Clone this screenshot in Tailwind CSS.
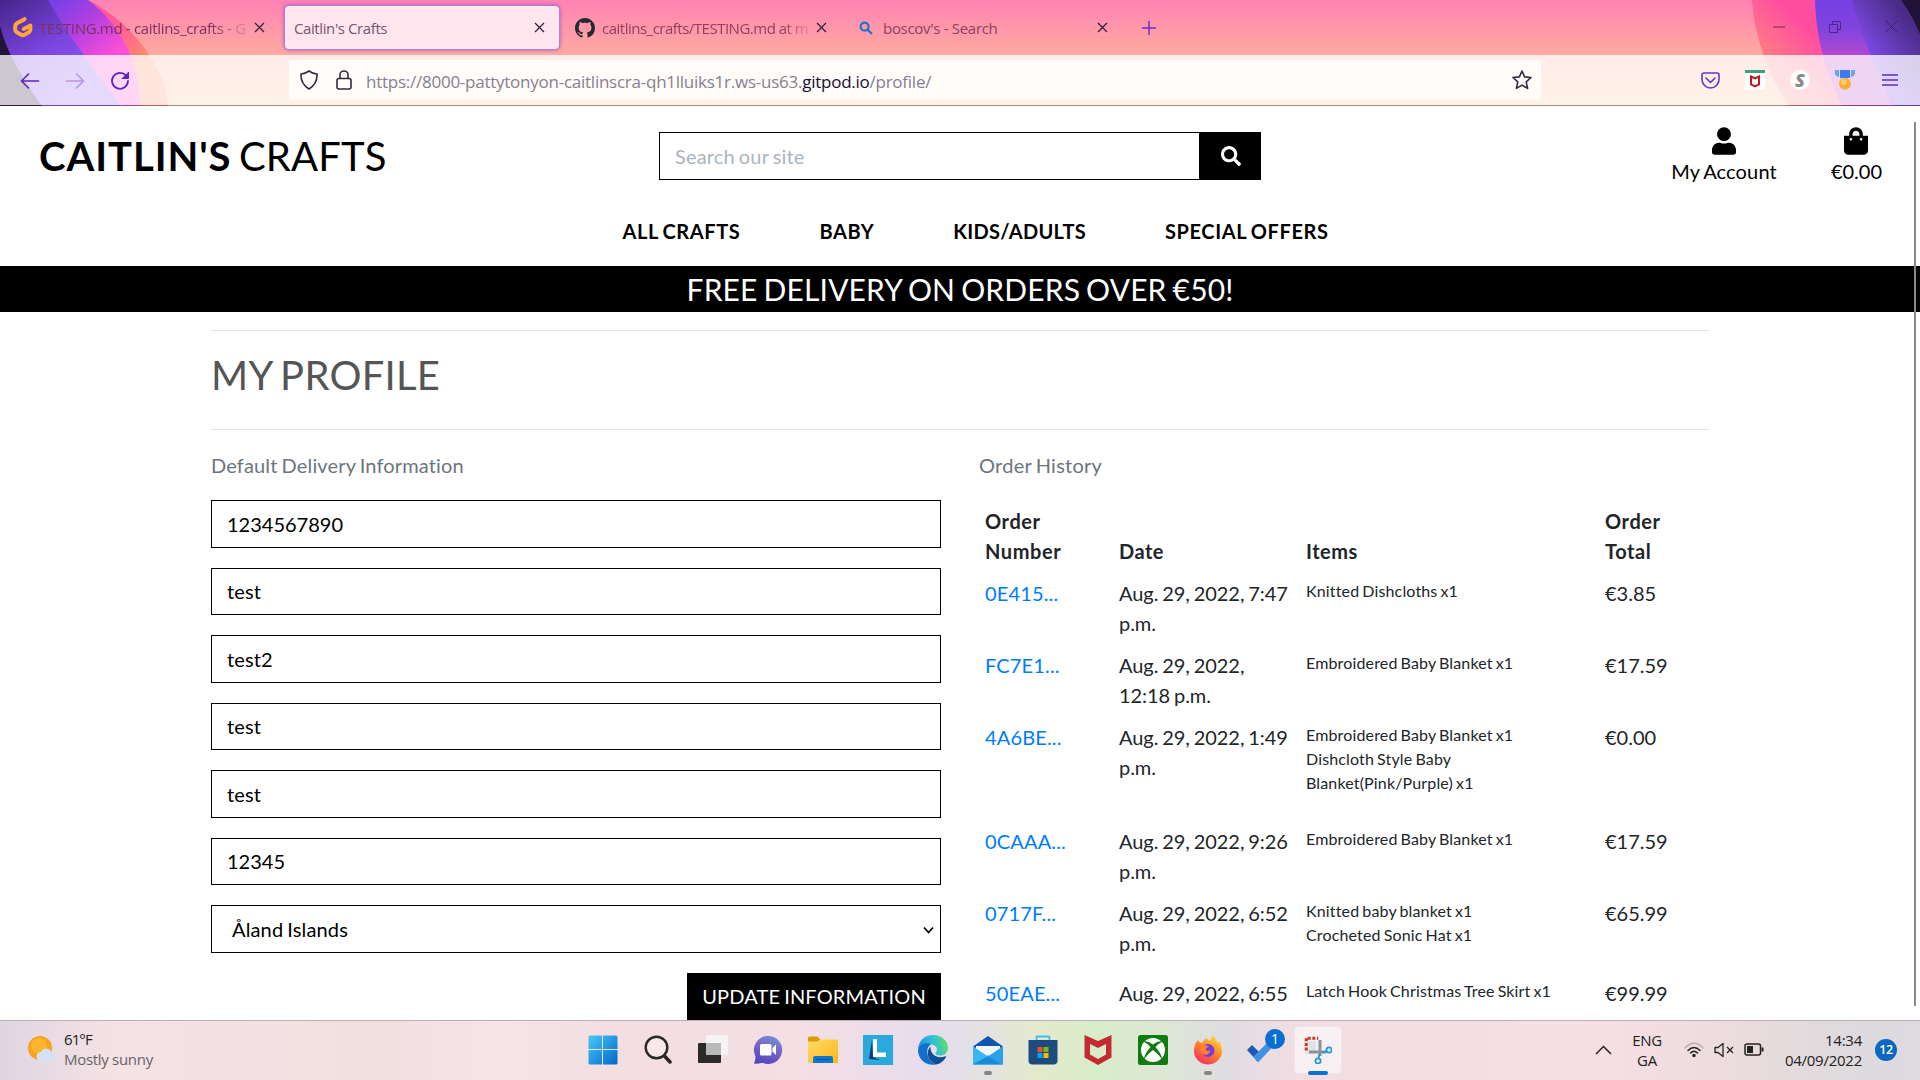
<!DOCTYPE html>
<html lang="en">
<head>
<meta charset="utf-8">
<title>Caitlin's Crafts</title>
<script src="https://cdn.jsdelivr.net/npm/@tailwindcss/browser@4"></script>
</head>
<body class="w-[1920px] h-[1080px] overflow-hidden flex flex-col bg-white font-['Lato',sans-serif] text-[20px] leading-[30px] text-[#212529]">

<!-- Browser chrome -->
<div class="relative shrink-0 h-[106px] font-['Open_Sans',sans-serif] text-[15px]">
  <svg class="absolute inset-0" width="1920" height="106" viewBox="0 0 1920 106">
    <defs>
      <linearGradient id="bg" x1="0" y1="0" x2="0" y2="106" gradientUnits="userSpaceOnUse"><stop offset="0" stop-color="#ff82b4"/><stop offset=".52" stop-color="#ffaba0"/><stop offset="1" stop-color="#ffc79a"/></linearGradient>
      <linearGradient id="pL" x1="0" y1="0" x2="60" y2="100" gradientUnits="userSpaceOnUse"><stop offset="0" stop-color="#45258a"/><stop offset=".55" stop-color="#7a45e0"/><stop offset="1" stop-color="#8f5cf0"/></linearGradient>
      <linearGradient id="vL" x1="60" y1="0" x2="110" y2="60" gradientUnits="userSpaceOnUse"><stop offset="0" stop-color="#7840e6"/><stop offset=".45" stop-color="#b53fe0"/><stop offset="1" stop-color="#ff4fd6"/></linearGradient>
      <linearGradient id="oL" x1="90" y1="0" x2="150" y2="60" gradientUnits="userSpaceOnUse"><stop offset="0" stop-color="#ff4fa0"/><stop offset=".5" stop-color="#ff5f96"/><stop offset="1" stop-color="#ff9068"/></linearGradient>
      <linearGradient id="mR" x1="1760" y1="60" x2="1800" y2="20" gradientUnits="userSpaceOnUse"><stop offset="0" stop-color="#ff8280"/><stop offset="1" stop-color="#ff4da0"/></linearGradient>
      <linearGradient id="pR" x1="0" y1="0" x2="0" y2="60" gradientUnits="userSpaceOnUse"><stop offset="0" stop-color="#7540e4"/><stop offset=".5" stop-color="#8244dc"/><stop offset="1" stop-color="#bb4ad0"/></linearGradient>
      <linearGradient id="qR" x1="1865" y1="45" x2="1905" y2="15" gradientUnits="userSpaceOnUse"><stop offset="0" stop-color="#7a48e2"/><stop offset="1" stop-color="#4a2c86"/></linearGradient>
    </defs>
    <rect width="1920" height="106" fill="url(#bg)"/>
    <path d="M88 0C125 18 165 62 168 106H0V0z" fill="url(#oL)"/>
    <path d="M88 0C118 22 140 60 140 106H0V0z" fill="url(#vL)"/>
    <path d="M48 0C62 25 88 62 121 106H0V0z" fill="url(#pL)"/>
    <path d="M0 26C6 50 20 76 42 106H0z" fill="#23123a"/>
    <path d="M1752 0C1754 35 1768 75 1789 106H1920V0z" fill="url(#mR)"/>
    <path d="M1815 0C1816 38 1826 76 1843 106H1920V0z" fill="url(#pR)"/>
    <path d="M1852 0C1860 30 1872 60 1893 106H1920V0z" fill="url(#qR)"/>
    <path d="M1901 0Q1912 15 1920 34V0z" fill="#22123a"/>
    <rect y="55" width="1920" height="50" fill="#fff" fill-opacity=".77"/>
    <rect y="105" width="1920" height="1" fill="#402040" fill-opacity=".4"/>
  </svg>

  <div class="relative h-[55px] flex items-start">
    <div class="w-[285px] h-[55px] pl-[13px] pr-[19px] flex items-center">
      <svg class="shrink-0" width="20" height="21" viewBox="0 0 20 21" fill="none"><path d="M11.5 2.200 4 6.300Q2.200 7.400 2.200 9.200v3.600q0 1.600 1.600 2.500l4.400 2.500q1.600.9 3.200 0l4.400-2.500q1.600-.9 1.600-2.500V8.500L10.800 12" stroke="#ffa53a" stroke-width="4" stroke-linecap="round" stroke-linejoin="round"/></svg>
      <div class="ml-[6px] w-[214px] whitespace-nowrap tracking-[-0.320px] text-[#7b3260] mask-r-from-80%">TESTING.md - caitlins_crafts - G</div>
      <svg class="ml-[1px] shrink-0" width="11" height="11" viewBox="0 0 11 11"><path d="M1 1l9 9M10 1l-9 9" stroke="#33203f" stroke-width="1.300"/></svg>
    </div>
    <div class="mt-[6px] w-[274px] h-[43px] pl-[9px] pr-[14px] flex items-center justify-between rounded-[4px] bg-[#ffe6ee] ring-1 ring-[#a77fe6] shadow-[0_0_5px_#7a3fb0]">
      <div class="tracking-[-0.400px] text-[#72566f]">Caitlin's Crafts</div>
      <svg width="11" height="11" viewBox="0 0 11 11"><path d="M1 1l9 9M10 1l-9 9" stroke="#33203f" stroke-width="1.300"/></svg>
    </div>
    <div class="w-[283px] h-[55px] pl-[16px] flex items-center">
      <svg class="shrink-0" width="20" height="20" viewBox="0 0 16 16"><path fill="#24292e" d="M8 0C3.58 0 0 3.58 0 8c0 3.54 2.29 6.53 5.47 7.59.4.07.55-.17.55-.38 0-.19-.01-.82-.01-1.49-2.01.37-2.53-.49-2.69-.94-.09-.23-.48-.94-.82-1.13-.28-.15-.68-.52-.01-.53.63-.01 1.08.58 1.23.82.72 1.21 1.87.87 2.33.66.07-.52.28-.87.51-1.07-1.78-.2-3.64-.89-3.64-3.95 0-.87.31-1.59.82-2.15-.08-.2-.36-1.02.08-2.12 0 0 .67-.21 2.2.82.64-.18 1.32-.27 2-.27s1.36.09 2 .27c1.53-1.04 2.2-.82 2.2-.82.44 1.1.16 1.92.08 2.12.51.56.82 1.27.82 2.15 0 3.07-1.87 3.75-3.65 3.95.29.25.54.73.54 1.48 0 1.07-.01 1.93-.01 2.200 0 .21.15.46.55.38A8.010 8.010 0 0 0 16 8c0-4.420-3.580-8-8-8z"/></svg>
      <div class="ml-[7px] w-[213px] whitespace-nowrap tracking-[-0.500px] text-[#90405f] mask-r-from-85%">caitlins_crafts/TESTING.md at m</div>
      <svg class="ml-[1px] shrink-0" width="11" height="11" viewBox="0 0 11 11"><path d="M1 1l9 9M10 1l-9 9" stroke="#33203f" stroke-width="1.300"/></svg>
    </div>
    <div class="w-[266px] h-[55px] pl-[17px] flex items-center">
      <svg width="14" height="14" viewBox="0 0 14 14" fill="none" stroke="#2472c8" stroke-width="2.200"><circle cx="5.600" cy="5.600" r="4"/><path d="M8.600 8.600 13 13"/></svg>
      <div class="ml-[10px] w-[214px] tracking-[-0.300px] text-[#8c4260]">boscov's - Search</div>
      <svg class="shrink-0" width="11" height="11" viewBox="0 0 11 11"><path d="M1 1l9 9M10 1l-9 9" stroke="#33203f" stroke-width="1.300"/></svg>
    </div>
    <svg class="mt-[20px] ml-[33px]" width="16" height="16" viewBox="0 0 16 16"><path d="M8 1v14M1 8h14" stroke="#6b30c4" stroke-width="1.500"/></svg>
    <div class="ml-auto h-[53px] pr-[22px] flex items-center gap-[44px]">
      <svg width="12" height="14" viewBox="0 0 12 14"><path d="M0 7h12" stroke="#782a58"/></svg>
      <svg width="12" height="12" viewBox="0 0 12 12" fill="none" stroke="#4d2788"><path d="M.5 3.500h8v8h-8zM3.500 3.500V.5h8v8h-3"/></svg>
      <svg width="13" height="13" viewBox="0 0 13 13" fill="none" stroke="#3d2365"><path d="M.5.5l12 12M12.500.5l-12 12"/></svg>
    </div>
  </div>

  <div class="relative h-[50px] flex items-center">
    <div class="w-[289px] pt-[1px] pl-[20px] flex items-center gap-[25px]">
      <svg width="20" height="20" viewBox="0 0 20 20" fill="none" stroke="#5b26bd" stroke-width="1.600" stroke-linecap="round" stroke-linejoin="round"><path d="M18.500 10H1.500M8.500 3 1.500 10l7 7"/></svg>
      <svg width="20" height="20" viewBox="0 0 20 20" fill="none" stroke="#b897e0" stroke-width="1.600" stroke-linecap="round" stroke-linejoin="round"><path d="M1.500 10h17M11.500 3l7 7-7 7"/></svg>
      <svg width="20" height="20" viewBox="0 0 20 20" fill="none" stroke="#5b26bd" stroke-width="1.800" stroke-linecap="round"><path d="M16 4.500A8 8 0 1 0 18 10"/><path d="M18.500 1.500v6h-6z" fill="#5b26bd" stroke-width="1"/></svg>
    </div>
    <div class="w-[1252px] h-[40px] pl-[11px] pr-[9px] flex items-center rounded-[4px] bg-[#fffcfa]">
      <svg width="18" height="20" viewBox="0 0 18 20" fill="none" stroke="#33283f" stroke-width="1.600" stroke-linejoin="round"><path d="M9 1Q5.500 3.500 1 4q-.5 10 8 15 8.500-5 8-15Q12.500 3.500 9 1z"/></svg>
      <svg class="ml-[18px]" width="16" height="20" viewBox="0 0 16 20" fill="none" stroke="#33283f" stroke-width="1.600"><rect x="1" y="8.500" width="14" height="10.500" rx="2"/><path d="M4 8.500V5a4 4 0 0 1 8 0v3.500"/></svg>
      <div class="ml-[14px] flex-1 pt-[3px] text-[17px] tracking-[-0.250px] text-[#86808e]">https://8000-pattytonyon-caitlinscra-qh1lluiks1r.ws-us63.<span class="text-[#1b0d33]">gitpod.io</span>/profile/</div>
      <svg width="20" height="20" viewBox="0 0 20 20" fill="none" stroke="#33283f" stroke-width="1.600" stroke-linejoin="round"><path d="m10 1 2.600 5.900 6.400.6-4.800 4.300 1.400 6.600L10 15.100l-5.600 3.300 1.400-6.600L1 7.500l6.400-.6z"/></svg>
    </div>
    <div class="ml-auto pr-[22px] flex items-center gap-[25px]">
      <svg width="19" height="17" viewBox="0 0 19 17" fill="none" stroke="#6538c2" stroke-width="1.600" stroke-linecap="round" stroke-linejoin="round"><path d="M3 1h13q2 0 2 2v4.500a8.500 8.500 0 0 1-17 0V3q0-2 2-2z"/><path d="m5 6 4.500 4.500L14 6"/></svg>
      <div class="w-[20px] h-[20px] bg-white border-t-[3px] border-[#3f9f80] flex justify-center items-center"><svg width="12" height="13" viewBox="0 0 12 13" fill="none" stroke="#c01820" stroke-width="2"><path d="M2 1.500 6 3.500l4-2v8L6 11.500 2 9.500z"/></svg></div>
      <div class="w-[20px] h-[20px] rounded-full bg-white text-center text-[18px] leading-[20px] font-extrabold italic text-[#8b8b8b]">S</div>
      <svg width="20" height="20" viewBox="0 0 20 20"><path d="M0 0h4v7q-4-1-4-4zM20 0h-4v7q4-1 4-4z" fill="#5fa8f2"/><path d="M5 0h10v8H5z" fill="#3f78f0"/><circle cx="10" cy="13.800" r="6" fill="#fdab3d"/><circle cx="8.800" cy="12" r="3" fill="#ffcf62"/></svg>
      <svg class="ml-[2px]" width="16" height="14" viewBox="0 0 16 14" stroke="#5c2cc8" stroke-width="1.500"><path d="M0 2h16M0 7h16M0 12h16"/></svg>
    </div>
  </div>
</div>

<!-- Page -->
<main class="relative flex-1 min-h-0 overflow-hidden tracking-[0.150px] [word-spacing:-1.200px]">
  <header>
    <div class="h-[100px] pl-[39px] pr-[38px] grid grid-cols-[620px_602px_1fr] items-center">
      <div class="text-[40px] leading-[48px] text-black whitespace-nowrap [word-spacing:-3px]"><span class="font-bold tracking-[0.950px]">CAITLIN'S</span> CRAFTS</div>
      <div class="flex h-[48px]">
        <div class="flex-1 border border-black pl-[15px] pt-[8px] text-[#aab4be]">Search our site</div>
        <div class="w-[61px] bg-black flex items-center justify-center">
          <svg width="20" height="20" viewBox="0 0 512 512" fill="#fff"><path d="M505 442.700 405.300 343c-4.500-4.500-10.600-7-17-7H372c27.600-35.300 44-79.700 44-128C416 93.100 322.900 0 208 0S0 93.100 0 208s93.100 208 208 208c48.300 0 92.700-16.400 128-44v16.300c0 6.400 2.500 12.500 7 17l99.700 99.700c9.400 9.400 24.600 9.400 33.900 0l28.300-28.300c9.400-9.400 9.400-24.600.1-34zM208 336c-70.700 0-128-57.200-128-128 0-70.700 57.200-128 128-128 70.700 0 128 57.200 128 128 0 70.700-57.200 128-128 128z"/></svg>
        </div>
      </div>
      <div class="flex justify-end gap-[54px] pt-[1px] text-black">
        <div class="flex flex-col items-center gap-[1px]">
          <svg width="24" height="28" viewBox="0 0 448 512"><path d="M224 256c70.700 0 128-57.300 128-128S294.700 0 224 0 96 57.300 96 128s57.300 128 128 128zm89.600 32h-16.700c-22.200 10.200-46.900 16-72.900 16s-50.600-5.800-72.900-16h-16.700C60.200 288 0 348.200 0 422.400V464c0 26.500 21.500 48 48 48h352c26.500 0 48-21.500 48-48v-41.600c0-74.200-60.200-134.400-134.400-134.400z"/></svg>
          <div>My Account</div>
        </div>
        <div class="flex flex-col items-center gap-[1px]">
          <svg width="24" height="28" viewBox="0 0 448 512"><path d="M352 160v-32C352 57.420 294.579 0 224 0 153.420 0 96 57.420 96 128v32H0v272c0 44.183 35.817 80 80 80h288c44.183 0 80-35.817 80-80V160h-96zm-192-32c0-35.290 28.710-64 64-64s64 28.710 64 64v32H160v-32zm160 120c-13.255 0-24-10.745-24-24s10.745-24 24-24 24 10.745 24 24-10.745 24-24 24zm-192 0c-13.255 0-24-10.745-24-24s10.745-24 24-24 24 10.745 24 24-10.745 24-24 24z"/></svg>
          <div class="tracking-normal">€0.00</div>
        </div>
      </div>
    </div>
    <nav class="h-[60px] pb-[10px] pl-[31px] flex items-center justify-center gap-[79px] font-bold text-black tracking-[0.600px]">
      <div>ALL CRAFTS</div><div>BABY</div><div class="tracking-[0.300px]">KIDS/ADULTS</div><div>SPECIAL OFFERS</div>
    </nav>
    <div class="h-[46px] bg-black text-white text-center text-[30px] leading-[46px] [word-spacing:-1.800px]">FREE DELIVERY ON ORDERS OVER €50!</div>
  </header>

  <div class="ml-[211px] w-[1498px] pt-[18px]">
    <div class="border-y border-[#e5e5e5] pt-[20px] pb-[30px] text-[40px] leading-[48px] text-[#555] [word-spacing:-2.400px] tracking-[0.250px]">MY PROFILE</div>
    <div class="mt-[20px] grid grid-cols-[730px_730px] gap-x-[38px]">
      <div>
        <p class="text-[#6c757d] mb-[20px]">Default Delivery Information</p>
        <div class="flex flex-col gap-[20px] text-black">
          <div class="h-[47.500px] border border-black px-[15px] pt-[8px] tracking-normal">1234567890</div>
          <div class="h-[47.500px] border border-black px-[15px] pt-[7.500px]">test</div>
          <div class="h-[47.500px] border border-black px-[15px] pt-[8px]">test2</div>
          <div class="h-[47.500px] border border-black px-[15px] pt-[7.500px]">test</div>
          <div class="h-[47.500px] border border-black px-[15px] pt-[8px]">test</div>
          <div class="h-[47.500px] border border-black px-[15px] pt-[7.500px] tracking-normal">12345</div>
          <div class="h-[47.500px] border border-black pl-[20px] pr-[6px] pt-[8px] flex justify-between">Åland Islands<svg class="mt-[12px]" width="11" height="9" viewBox="0 0 11 9" fill="none" stroke="#000" stroke-width="1.800"><path d="m1 1.500 4.500 5 4.500-5"/></svg></div>
          <div class="self-end h-[50px] w-[254px] bg-black text-white text-center pt-[8px] whitespace-nowrap">UPDATE INFORMATION</div>
        </div>
      </div>
      <div>
        <p class="text-[#6c757d] mb-[20px] tracking-[0.250px]">Order History</p>
        <div class="grid grid-cols-[134px_187px_299px_110px] [&>*]:p-[6px] [&>ul]:pt-[7px] [&>ul]:pb-[5px] [&>ul]:[word-spacing:-1.200px]">
          <div class="font-bold tracking-[0.600px]">Order<br>Number</div><div class="font-bold self-end tracking-[0.500px]">Date</div><div class="font-bold self-end tracking-[0.500px]">Items</div><div class="font-bold tracking-[0.600px]">Order<br>Total</div>

          <div class="text-[#007bff]">0E415...</div><div class="tracking-[-0.050px]">Aug. 29, 2022, 7:47 p.m.</div><ul class="text-[16px] leading-[24px]"><li class="mb-[20px]">Knitted Dishcloths x1</li></ul><div class="tracking-normal">€3.85</div>

          <div class="text-[#007bff]">FC7E1...</div><div class="tracking-[-0.050px]">Aug. 29, 2022,<br>12:18 p.m.</div><ul class="text-[16px] leading-[24px]"><li class="mb-[20px]">Embroidered Baby Blanket x1</li></ul><div class="tracking-normal">€17.59</div>

          <div class="text-[#007bff]">4A6BE...</div><div class="tracking-[-0.050px]">Aug. 29, 2022, 1:49 p.m.</div><ul class="text-[16px] leading-[24px]"><li>Embroidered Baby Blanket x1</li><li class="mb-[20px]">Dishcloth Style Baby<br>Blanket(Pink/Purple) x1</li></ul><div class="tracking-normal">€0.00</div>

          <div class="text-[#007bff]">0CAAA...</div><div class="tracking-[-0.050px]">Aug. 29, 2022, 9:26 p.m.</div><ul class="text-[16px] leading-[24px]"><li class="mb-[20px]">Embroidered Baby Blanket x1</li></ul><div class="tracking-normal">€17.59</div>

          <div class="text-[#007bff]">0717F...</div><div class="tracking-[-0.050px]">Aug. 29, 2022, 6:52 p.m.</div><ul class="text-[16px] leading-[24px]"><li>Knitted baby blanket x1</li><li class="mb-[20px]">Crocheted Sonic Hat x1</li></ul><div class="tracking-normal">€65.99</div>

          <div class="text-[#007bff]">50EAE...</div><div class="tracking-[-0.050px]">Aug. 29, 2022, 6:55</div><ul class="text-[16px] leading-[24px]"><li>Latch Hook Christmas Tree Skirt x1</li></ul><div class="tracking-normal">€99.99</div>
        </div>
      </div>
    </div>
  </div>
  <div class="absolute right-[4px] top-[16px] w-[2px] h-[884px] bg-[#8a8a8a]"></div>
</main>

<!-- Taskbar -->
<footer class="relative shrink-0 h-[60px] border-t border-[#b9afb4] flex items-center font-['Open_Sans',sans-serif] text-[15px] leading-[20px] text-[#222]">
  <div class="absolute inset-0 bg-[linear-gradient(90deg,#dfd5e2_0%,#f5e2e4_6%,#f2dfe0_20%,#f6e4e8_26%,#f3dfe1_32%,#f3dfe4_42%,#e9dcec_48%,#e4dfea_50%,#e4e9cd_54%,#d8edc9_57%,#dce6d5_61%,#e0dde2_64%,#f3dde2_68%,#f3dfe3_75%,#f5dfe4_84%,#ecdcdd_90%,#dedadd_96%,#dddbe0_100%)]"></div>
  <div class="relative w-[575px] pb-[3px] pl-[27px] flex items-center gap-[9px]">
    <svg width="28" height="28" viewBox="0 0 28 28"><circle cx="13" cy="13" r="12" fill="#f9a21b"/><circle cx="12" cy="11" r="8" fill="#fbb52e"/><path d="M14 26a4.500 4.500 0 0 1 0-9 5.500 5.500 0 0 1 10.500 1A4 4 0 0 1 24 26z" fill="#d6e2f4"/></svg>
    <div class="tracking-[-0.900px]"><div>61°F</div><div class="text-[#68636a] tracking-[-0.300px]">Mostly sunny</div></div>
  </div>
  <div class="relative flex h-full pb-px [&>*]:w-[55px] [&>*]:flex [&>*]:justify-center [&>*]:items-center">
    <div><svg width="30" height="30" viewBox="0 0 30 30"><defs><linearGradient id="w" x1="0" y1="0" x2="1" y2="1"><stop stop-color="#48c8f8"/><stop offset="1" stop-color="#0068c8"/></linearGradient></defs><path d="M1.500.5H14V14H.5V1.500zM15 .5h13.500l1 1V14H15zM.5 15H14v14.500H1.500l-1-1zM15 15h14.500v13.500l-1 1H15z" fill="url(#w)"/></svg></div>
    <div><svg width="28" height="30" viewBox="0 0 28 30" fill="none" stroke="#2b2727" stroke-linecap="round"><circle cx="12.500" cy="12.500" r="10.800" stroke-width="2.400" fill="#fff" fill-opacity=".3"/><path d="m20.500 21 5.500 6" stroke-width="3.500"/></svg></div>
    <div><svg width="30" height="30" viewBox="0 0 30 30"><rect x="0" y="8" width="23" height="20" rx="1" fill="#2b2b2b"/><rect x="8" y="0" width="22" height="20" rx="1" fill="#f5f5f5" fill-opacity=".9"/><path d="M8 8h15v12H8z" fill="#b9b9b9"/></svg></div>
    <div><svg width="30" height="30" viewBox="0 0 30 30"><defs><linearGradient id="ch" x1=".7" y1="0" x2=".3" y2="1"><stop stop-color="#6c92dc"/><stop offset=".4" stop-color="#7a68c4"/><stop offset="1" stop-color="#5046c0"/></linearGradient></defs><path d="M15 1a14 14 0 1 1-5.500 26.800Q5 29 1 28.500q1.500-3 1.500-7A14 14 0 0 1 15 1z" fill="url(#ch)"/><rect x="7" y="9" width="11.500" height="11.500" rx="1.500" fill="#fff"/><path d="m19.500 13 3.500-3.500v10.500l-3.500-3.500z" fill="#fff"/></svg></div>
    <div><svg width="30" height="28" viewBox="0 0 30 28"><defs><linearGradient id="fo" x1="0" y1="0" x2="1" y2="1"><stop stop-color="#ffda6a"/><stop offset="1" stop-color="#fbb815"/></linearGradient></defs><path d="M0 6V2q0-1.500 1.500-1.500h8L12.500 4v4z" fill="#dc9c06"/><path d="M0 5.500h9L12.500 3.500H30V27H0z" fill="url(#fo)"/><path d="M5 27v-5q0-2 2-2h16q2 0 2 2v5z" fill="#1276cf"/><path d="M8 23.500h14" stroke="#0a4f98"/></svg></div>
    <div><div class="w-[30px] h-[30px] bg-[#29a9dc]"><svg width="30" height="30" viewBox="0 0 30 30"><path d="m9 5-3 19 11 1-7-3z" fill="#123a78"/><path d="M10 4h4v13.500h9V22H10z" fill="#fff"/></svg></div></div>
    <div><svg width="30" height="30" viewBox="0 0 30 30"><defs><linearGradient id="e1" x1="0" y1=".5" x2="1" y2=".3"><stop stop-color="#1a90de"/><stop offset=".5" stop-color="#30bfdc"/><stop offset="1" stop-color="#60e060"/></linearGradient></defs><path d="M0 14C1 5 7 0 15 0c9 0 15 6 15 13 0 5-4 7.500-7.500 7.500-4 0-5.500-1.500-5-3 1.500-1 2-3 1-5C16 8 5 7 0 14z" fill="url(#e1)"/><path d="M0 15C1 9 8 7 13 9q-5 4-3.500 10.500 2 7.500 8.500 10C9 31.500 0 25 0 15z" fill="#1170cc"/><path d="M12.500 11.500C7 17 10 26 18 29.500c4-.5 8-3.500 10-7.500.3-.6-.3-1-.8-.700C21 24 12 21 12.500 11.500z" fill="#0f4f96"/></svg></div>
    <div class="relative"><svg width="30" height="29" viewBox="0 0 30 29"><path d="M0 10.500 15 0l15 10.500-15 9z" fill="#0d56ae"/><path d="M3 10h24v9H3z" fill="#f2f4f8"/><path d="M0 10.500V28.500h30V10.500L15 20.500z" fill="#37b8f0"/><path d="m0 28.500 15-8.500L30 28.500z" fill="#198ad8"/><path d="m15 20.500 15-10v18z" fill="#2ba2e6"/></svg><i class="absolute bottom-[4px] w-[8px] h-[4px] rounded-full bg-[#858585]"></i></div>
    <div><svg width="30" height="30" viewBox="0 0 30 30"><path d="M8.500 6V2.500q0-1 1-1h11q1 0 1 1V6" fill="none" stroke="#3cc0f0" stroke-width="1.800"/><path d="M.5 5h29v20.500q0 4-4 4h-21q-4 0-4-4z" fill="#1c4b80"/><path d="M9.500 12h5v5h-5z" fill="#f25022"/><path d="M15.500 12h5v5h-5z" fill="#7fba00"/><path d="M9.500 18h5v5h-5z" fill="#00a4ef"/><path d="M15.500 18h5v5h-5z" fill="#ffb900"/></svg></div>
    <div><svg width="28" height="30" viewBox="0 0 28 30"><path d="m.5 0 13.500 6L27.500 0v22.500L14 30 .5 22.500zM6 9v10.500l8 4.500 8-4.500V9l-8 4z" fill="#c42b30" fill-rule="evenodd"/></svg></div>
    <div><svg width="30" height="30" viewBox="0 0 30 30"><rect width="30" height="30" rx="2.500" fill="#107c10"/><circle cx="15" cy="15" r="12" fill="#fff"/><path d="M5 6.500Q9.500 5 15 9.500 20.500 5 25 6.500 21 8 17.500 12q7 8 6.500 13-2-4.500-9-10-7 5.500-9 10Q5.500 20 12.500 12 9 8 5 6.500z" fill="#107c10"/></svg></div>
    <div class="relative"><svg width="30" height="30" viewBox="0 0 30 30"><defs><linearGradient id="ff" x1=".8" y1="0" x2=".2" y2="1"><stop stop-color="#ffe040"/><stop offset=".45" stop-color="#ff8a28"/><stop offset="1" stop-color="#f52864"/></linearGradient></defs><path d="M5 5q1 2.500 4 3 2-4 5-5 0 2 3 3Q18 3 20 0q3 4 5 8l1-2q3 5 3 10A14 13.500 0 0 1 1 16Q1 9 5 5z" fill="url(#ff)"/><circle cx="15" cy="15.500" r="6.500" fill="#7b3bd6"/><path d="M8 11q5-2 8 1-3 0-3.500 2.500 2 2.500 5 .5-2 6.500-8 4Q6.500 16 8 11z" fill="#ff8528"/></svg><i class="absolute bottom-[4px] w-[8px] h-[4px] rounded-full bg-[#858585]"></i></div>
    <div class="relative"><svg class="mr-[6px]" width="28" height="24" viewBox="0 0 28 24"><path d="m1 12 5-5 11 11-5.500 5.500z" fill="#1f59b8"/><path d="m7.500 18.500 15-15 5 4.500L13 23.500q-1 .8-2 0z" fill="#3f92e4"/></svg><b class="absolute left-[30px] top-[8px] w-[20px] h-[20px] rounded-full bg-[#0a6fd0] text-white text-[14px] leading-[20px] font-normal text-center">1</b></div>
    <div class="relative"><span class="w-[48px] h-[48px] rounded-[5px] bg-[#f9f0f4] border border-[#eee4ea] flex justify-center items-center"><svg width="28" height="28" viewBox="0 0 28 28" fill="none"><path d="M1 18h11V5H3z" fill="#dfe3e8"/><path d="M2.200 14.500V2.200h12" stroke="#c83a18" stroke-width="3" stroke-dasharray="3 1.600"/><path d="M16 4v16M5 16h17" stroke="#8d9298" stroke-width="3"/><circle cx="25" cy="14" r="2.600" stroke="#1a9ad8" stroke-width="1.800"/><circle cx="14" cy="25" r="2.600" stroke="#1a9ad8" stroke-width="1.800"/><path d="m22.500 15.500-4 1M14.500 22l1-4" stroke="#1a9ad8" stroke-width="1.800"/></svg></span><i class="absolute bottom-[4px] w-[20px] h-[4px] rounded-full bg-[#0a74d4]"></i></div>
  </div>
  <div class="relative ml-auto pr-[23px] flex items-center pb-[2px]">
    <svg width="17" height="10" viewBox="0 0 17 10" fill="none" stroke="#222" stroke-width="1.500"><path d="m1 9 7.500-7.500L16 9"/></svg>
    <div class="ml-[20px] text-center tracking-[-0.300px] w-[30px]">ENG<br>GA</div>
    <svg class="ml-[22px]" width="20" height="16" viewBox="0 0 20 16" fill="none" stroke-width="1.500" stroke-linecap="round"><path d="M1 6q9-9.500 18 0" stroke="#b8acae"/><path d="M4 8.500q6-6 12 0M6.500 11q3.500-3.500 7 0" stroke="#222"/><circle cx="10" cy="13.500" r="1.700" fill="#222"/></svg>
    <svg class="ml-[10px]" width="20" height="16" viewBox="0 0 20 16" fill="none" stroke="#222" stroke-width="1.300"><path d="M1 5.500h3L9 1.500v13l-5-4H1z" stroke-linejoin="round"/><path d="m13 5 6 6m0-6-6 6"/></svg>
    <svg class="ml-[10px]" width="20" height="13" viewBox="0 0 20 13" fill="none" stroke="#222" stroke-width="1.500"><rect x="1" y="1" width="15.500" height="11" rx="2"/><path d="M3 3h6v7H3z" fill="#222" stroke="none"/><path d="M18.500 4.500v4" stroke-width="2"/></svg>
    <div class="ml-[19px] w-[79px] text-right tracking-[-0.250px] whitespace-nowrap">14:34<br>04/09/2022</div>
    <div class="ml-[13px] w-[22px] h-[22px] rounded-full bg-[#0b67c2] text-white text-center text-[12.500px] leading-[22px] font-semibold tracking-[-0.500px]">12</div>
  </div>
</footer>
</body>
</html>
